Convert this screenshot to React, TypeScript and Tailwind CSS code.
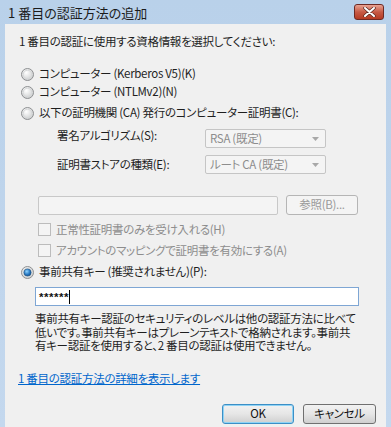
import React from 'react'

const font = { fontFamily: '"Noto Sans CJK JP", "Noto Sans", sans-serif' }

function Radio({ checked = false }: { checked?: boolean }) {
  return (
    <svg width="13" height="13" viewBox="0 0 13 13" className="shrink-0">
      <defs>
        <radialGradient id="rIn" cx="0.4" cy="0.35" r="0.7">
          <stop offset="0" stopColor="#ffffff" />
          <stop offset="1" stopColor="#c9cbcc" />
        </radialGradient>
        <radialGradient id="rDot" cx="0.4" cy="0.35" r="0.7">
          <stop offset="0" stopColor="#8fd3ff" />
          <stop offset="0.6" stopColor="#2a7bc4" />
          <stop offset="1" stopColor="#0f4d8c" />
        </radialGradient>
      </defs>
      <circle cx="6.5" cy="6.5" r="6" fill="url(#rIn)" stroke="#8e9092" strokeWidth="1" />
      <circle cx="6.5" cy="6.5" r="4.3" fill="none" stroke="#d6d8d9" strokeWidth="1" />
      {checked && <circle cx="6.5" cy="6.5" r="3.6" fill="url(#rDot)" stroke="#1b4f80" strokeWidth="0.6" />}
    </svg>
  )
}

function Checkbox() {
  return <span className="w-[13px] h-[13px] shrink-0 border border-[#bcbcbc] bg-[#f4f4f4]" />
}

function Select({ label }: { label: string }) {
  return (
    <div className="w-[121px] h-[19px] border border-[#c5c5c5] rounded-[2px] bg-[#f4f4f4] flex items-center pl-[4px] pr-[6px] text-[#8d8d8d]">
      <span className="flex-1">{label}</span>
      <svg width="7" height="4" viewBox="0 0 7 4"><path d="M0 0 H7 L3.5 4 Z" fill="#a8a8a8" /></svg>
    </div>
  )
}

export default function App() {
  return (
    <div
      className="w-[391px] h-[427px] flex flex-col bg-gradient-to-b from-[#b9d1ea] to-[#c4d8ee] text-[11.5px] tracking-[-0.3px] text-[#1e1e1e] leading-none [font-feature-settings:'palt'] whitespace-nowrap"
      style={font}
    >
      <div className="h-[24px] flex items-start justify-between pl-[8px] pr-[7px]">
        <span className="mt-[6px] text-[13px] tracking-normal text-[#1b1b1b]">1 番目の認証方法の追加</span>
        <div className="mt-[4px] w-[30px] h-[16px] rounded-[3px] border border-[#6e2a24] bg-gradient-to-b from-[#e8a393] via-[#c75a45] to-[#b53a22] flex items-center justify-center">
          <svg width="13" height="10" viewBox="0 0 13 10">
            <path d="M2 1 L11 9 M11 1 L2 9" stroke="#5a2a22" strokeWidth="3.4" strokeLinecap="round" />
            <path d="M2 1 L11 9 M11 1 L2 9" stroke="#ffffff" strokeWidth="2" strokeLinecap="round" />
          </svg>
        </div>
      </div>

      <div className="flex-1 mx-[5px] bg-[#f0f0f0] flex flex-col pl-[14px] pr-[10px]">
        <div className="h-[14px] mt-[11px] flex items-center">1 番目の認証に使用する資格情報を選択してください:</div>

        <div className="mt-[16px] flex flex-col">
          <div className="h-[18px] flex items-center gap-[5px] pl-[2px]">
            <Radio />
            <span>コンピューター (Kerberos V5)(K)</span>
          </div>
          <div className="h-[18px] flex items-center gap-[5px] pl-[2px]">
            <Radio />
            <span>コンピューター (NTLMv2)(N)</span>
          </div>
          <div className="h-[20px] mt-[2px] flex items-center gap-[5px] pl-[2px]">
            <Radio />
            <span>以下の証明機関 (CA) 発行のコンピューター証明書(C):</span>
          </div>
        </div>

        <div className="mt-[6px] pl-[38px] flex flex-col gap-[7px]">
          <div className="flex items-center h-[19px]">
            <span className="w-[148px] -mt-[5px]">署名アルゴリズム(S):</span>
            <Select label="RSA (既定)" />
          </div>
          <div className="flex items-center h-[19px]">
            <span className="w-[148px]">証明書ストアの種類(E):</span>
            <Select label="ルート CA (既定)" />
          </div>
        </div>

        <div className="mt-[21px] pl-[19px] flex items-center gap-[8px]">
          <div className="w-[240px] h-[19px] border border-[#c8c8c8] rounded-[2px] bg-[#f4f4f4]" />
          <div className="w-[72px] h-[20px] border border-[#b5b5b5] rounded-[3px] bg-[#f4f4f4] flex items-center justify-center text-[#9a9a9a]">参照(B)...</div>
        </div>

        <div className="mt-[8px] pl-[19px] flex flex-col gap-[8px] text-[#8d8d8d]">
          <div className="h-[13px] flex items-center gap-[5px]">
            <Checkbox />
            <span>正常性証明書のみを受け入れる(H)</span>
          </div>
          <div className="h-[13px] flex items-center gap-[5px]">
            <Checkbox />
            <span>アカウントのマッピングで証明書を有効にする(A)</span>
          </div>
        </div>

        <div className="mt-[8px] h-[14px] flex items-center gap-[5px] pl-[2px]">
          <Radio checked />
          <span>事前共有キー (推奨されません)(P):</span>
        </div>

        <div className="mt-[8px] ml-[16px] w-[324px] h-[19px] border border-[#7ea6d4] bg-white flex items-center pl-[3px]">
          <span className="font-bold text-[#111] tracking-[0.5px] mt-[3px]" style={{ fontFamily: '"Liberation Sans", sans-serif' }}>******</span>
          <span className="w-px h-[14px] bg-black" />
        </div>

        <p className="mt-[6px] ml-[16px] leading-[13.5px]">
          事前共有キー認証のセキュリティのレベルは他の認証方法に比べて<br />
          低いです。事前共有キーはプレーンテキストで格納されます。事前共<br />
          有キー認証を使用すると、2 番目の認証は使用できません。
        </p>

        <a href="#" className="mt-[20px] self-start underline text-[#0066cc] h-[14px] -ml-[1px]">1 番目の認証方法の詳細を表示します</a>

        <div className="mt-[17px] flex justify-end gap-[9px]">
          <button className="w-[72px] h-[20px] rounded-[3px] border border-[#3c8fc6] shadow-[inset_0_0_0_1px_#8fd3f5] bg-gradient-to-b from-[#f2f2f2] via-[#e6e6e6] to-[#cfcfcf] flex items-center justify-center text-[#111]">OK</button>
          <button className="w-[73px] h-[20px] rounded-[3px] border border-[#707070] bg-gradient-to-b from-[#f2f2f2] via-[#e6e6e6] to-[#cfcfcf] flex items-center justify-center text-[#111]">キャンセル</button>
        </div>
      </div>
    </div>
  )
}
